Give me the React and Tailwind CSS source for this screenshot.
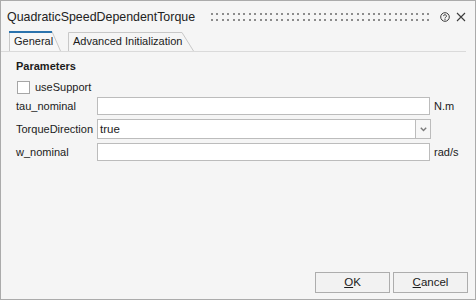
import React from "react";

function Grip() {
  const cols = 41;
  const dots = [];
  for (let i = 0; i < cols; i++) {
    const x = Math.round(i * 5.4);
    dots.push(<rect key={"a" + i} x={x} y={0} width={2} height={2} fill="#8c8c8c" />);
    dots.push(<rect key={"b" + i} x={x} y={6} width={2} height={2} fill="#8c8c8c" />);
  }
  return (
    <svg width="219" height="8" viewBox="0 0 219 8" className="block">
      {dots}
    </svg>
  );
}

function HelpIcon() {
  return (
    <svg width="10" height="10" viewBox="0 0 10 10" className="block">
      <circle cx="5" cy="5" r="4.3" fill="none" stroke="#3c3c3c" strokeWidth="1" />
      <path d="M3.6 4.1a1.4 1.4 0 1 1 2.1 1.2c-.5.3-.7.5-.7 1v.2" fill="none" stroke="#3c3c3c" strokeWidth="1" />
      <rect x="4.5" y="7.1" width="1" height="1" fill="#3c3c3c" />
    </svg>
  );
}

function CloseIcon() {
  return (
    <svg width="10" height="10" viewBox="0 0 10 10" className="block">
      <path d="M1 1L9 9M9 1L1 9" stroke="#3c3c3c" strokeWidth="1.1" />
    </svg>
  );
}

function Tab({ width, topY, slantX, active, children }) {
  return (
    <div className="relative h-[20px] flex items-center pl-[5px]" style={{ width }}>
      <svg
        width={width}
        height="20"
        viewBox={`0 0 ${width} 20`}
        className="absolute left-0 top-0 pointer-events-none"
      >
        <path
          d={`M0.5 20 L0.5 ${topY + 0.5} L${slantX} ${topY + 0.5} L${width - 0.5} 20`}
          fill={active ? "#f7f7f7" : "none"}
          stroke="#c8c8c8"
          strokeWidth="1"
        />
        {active && <rect x="0" y="0" width={slantX} height="2" fill="#2b73ad" />}
      </svg>
      <span className="relative text-[11px] leading-[13px] pt-[1px]">{children}</span>
    </div>
  );
}

function TextBox() {
  return <div className="w-[333px] h-[18px] border border-[#bcbcbc] bg-white" />;
}

export default function App() {
  return (
    <div className="w-[476px] h-[300px] border border-[#ababab] bg-[#f5f5f5] flex flex-col font-['Liberation_Sans',Arial,sans-serif] text-[#1b1b1b] overflow-hidden">
      {/* Title bar */}
      <div className="h-[30px] flex items-center pl-[6px] pr-[9px] pt-[2px] shrink-0">
        <span className="text-[12.4px] leading-[15px] text-[#222]">QuadraticSpeedDependentTorque</span>
        <div className="ml-auto">
          <Grip />
        </div>
        <div className="ml-[10px]">
          <HelpIcon />
        </div>
        <div className="ml-[6px]">
          <CloseIcon />
        </div>
      </div>

      {/* Tabs */}
      <div className="h-[21px] flex items-end border-b border-[#dadada] mr-[9px] pl-[8px] shrink-0">
        <Tab width={52} topY={0} slantX={43} active>
          General
        </Tab>
        <div className="ml-[7px]">
          <Tab width={126} topY={1} slantX={114}>
            Advanced Initialization
          </Tab>
        </div>
      </div>

      {/* Content */}
      <div className="flex flex-col pl-[15px] pt-[8px] text-[11px]">
        <div className="font-bold leading-[13px]">Parameters</div>

        <div className="mt-[8px] h-[13px] flex items-center">
          <div className="ml-[1px] w-[13px] h-[13px] border border-[#a6a6a6] bg-white" />
          <span className="ml-[5px] leading-[13px]">useSupport</span>
        </div>

        <div className="mt-[3px] h-[18px] flex items-center">
          <span className="w-[81px] leading-[13px]">tau_nominal</span>
          <TextBox />
          <span className="ml-[4px] leading-[13px]">N.m</span>
        </div>

        <div className="mt-[4px] h-[20px] flex items-center">
          <span className="w-[81px] leading-[13px]">TorqueDirection</span>
          <div className="w-[319px] h-[20px] border border-[#bcbcbc] bg-white flex items-center pl-[2px]">
            <span className="leading-[13px] text-[11.5px]">true</span>
          </div>
          <div className="w-[15px] h-[20px] border border-l-0 border-[#bcbcbc] bg-[#f7f7f7] flex items-center justify-center">
            <svg width="7" height="5" viewBox="0 0 7 5" className="block">
              <path d="M0.8 0.8L3.5 3.5L6.2 0.8" fill="none" stroke="#7a7a7a" strokeWidth="1.4" />
            </svg>
          </div>
        </div>

        <div className="mt-[4px] h-[18px] flex items-center">
          <span className="w-[81px] leading-[13px]">w_nominal</span>
          <TextBox />
          <span className="ml-[4px] leading-[13px]">rad/s</span>
        </div>
      </div>

      {/* Buttons */}
      <div className="mt-auto flex justify-end gap-[3px] pr-[7px] pb-[6px] text-[11.5px]">
        <button className="w-[75px] h-[21px] border border-[#adadad] bg-[#f2f2f2] flex items-center justify-center leading-[13px]">
          <span>
            <span className="underline">O</span>K
          </span>
        </button>
        <button className="w-[75px] h-[21px] border border-[#adadad] bg-[#f2f2f2] flex items-center justify-center leading-[13px]">
          <span>
            <span className="underline">C</span>ancel
          </span>
        </button>
      </div>
    </div>
  );
}
